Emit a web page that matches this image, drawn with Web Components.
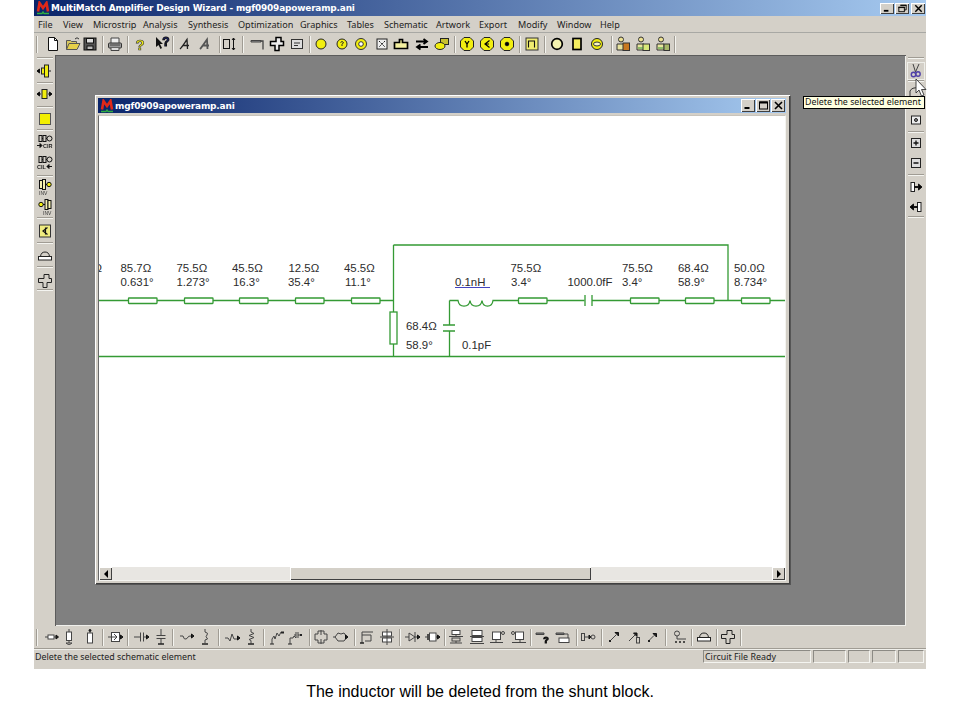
<!DOCTYPE html>
<html lang="en"><head><meta charset="utf-8"><title>MultiMatch</title>
<style>
html,body{margin:0;padding:0;background:#fff}
body{width:960px;height:720px;overflow:hidden;font-family:"Liberation Sans",Arial,sans-serif}
</style></head><body>
<mm-app>
  <mm-titlebar slot="title" text="MultiMatch Amplifier Design Wizard - mgf0909apoweramp.ani"></mm-titlebar>
  <mm-menubar slot="menu" items="File:38,View:63,Microstrip:93,Analysis:143,Synthesis:188,Optimization:238,Graphics:300,Tables:347,Schematic:384,Artwork:436,Export:479,Modify:518,Window:557,Help:600"></mm-menubar>
  <mm-strip slot="top" start="34" spec="|37 53:new 73:open 90:save |103 115:print |128 140:help 162:whats |173 185:a1 205:a2 |220 229:boxarrow |243 258:hammer 277:crossb 297:lbox |310 321:c1 342:c2 361:c3 382:xbox 401:tab 422:arrows 442:over |455 467:cy 487:cl 507:cd |520 532:pulse |545 557:co 577:rr 597:el |612 623:p1 643:p2 663:p3 |675"></mm-strip>
  <mm-strip slot="left" vertical start="55" spec="|58 71:l1 |83 94:l2 |107 119:sq |130 142:cir 163:cil |176 187:inv1 207:inv2 |218 231:lk |243 256:dome |267 281:cross |290"></mm-strip>
  <mm-mdi slot="mdi">
    <mm-child text="mgf0909apoweramp.ani">
      <mm-circuit></mm-circuit>
    </mm-child>
  </mm-mdi>
  <mm-strip slot="right" vertical start="55" spec="|58 71:sc |81 92:hid |108 120:dot |132 143:plus 163:minus |175 187:barr 207:larr |217"></mm-strip>
  <mm-strip slot="bottom" start="34" spec="|37 52:b1 69:b2 90:b3 |103 116:b4 |128 142:b5 161:b6 |173 187:b7 205:b8 |219 233:b9 251:b10 |264 277:b11 295:b12 |310 321:b13 341:b14 |355 367:b15 387:b16 |400 413:b17 433:b18 |445 456:b19 477:b20 498:b21 518:b22 |531 543:b23 563:b24 |577 588:b25 |602 614:b26 634:b27 653:b28 |666 680:b29 |692 704:dome |717 728:cross |741"></mm-strip>
  <mm-status slot="status" text="Delete the selected schematic element" ready="Circuit File Ready"></mm-status>
  <mm-tooltip slot="over" text="Delete the selected element"></mm-tooltip>
</mm-app>
<mm-caption text="The inductor will be deleted from the shunt block."></mm-caption>

<script>
const UI='"Noto Sans","Liberation Sans",Arial,sans-serif';
const Y='#f2ee10';
const CR='M7 1.5h5v4h2.500v4H10v5H6v-5H1.500v-4H7z';
const ICONS={
new:`<path d="M3.500 1.500h6l3 3v10h-9z" fill="#fff"/><path d="M9.500 1.500v3h3"/>`,
open:`<path d="M1.500 13.500v-9h4l1 1h5v2" fill="#d8c860" stroke="#555"/><path d="M1.500 13.500l2.500-6h11l-3 6z" fill="#e6d04a" stroke="#555"/><path d="M10 3q2-2.500 4 0" stroke="#333"/>`,
save:`<rect x="2" y="2" width="12" height="12" fill="#555"/><rect x="4.500" y="2.500" width="7" height="4.500" fill="#ddd"/><rect x="5" y="10" width="6" height="3.500" fill="#bbb"/>`,
print:`<path d="M4 7V2h8v5" fill="#eee" stroke="#444"/><rect x="1.500" y="7" width="13" height="5" rx="1" fill="#999" stroke="#333"/><path d="M4 12v2.500h8V12" fill="#ddd" stroke="#444"/><path d="M3 9h10" stroke="#444"/>`,
help:`<text x="8" y="14" text-anchor="middle" font-family="Liberation Sans" font-weight="700" font-size="15" fill="${Y}" stroke="#333" stroke-width=".6">?</text>`,
whats:`<path d="M2 1v10l2.500-2 2 4 1.500-1-2-4h3z" fill="#111" stroke="none"/><text x="12" y="10" text-anchor="middle" font-family="Liberation Sans" font-weight="700" font-size="12" fill="#16208a">?</text>`,
a1:`<path d="M3 13C5 11 7.500 7 10 3.500L10.500 13M6 9.500h6" stroke="#222" stroke-width="1.300"/>`,
a2:`<path d="M3 13C5 11 7.500 7 10 3.500L10.500 13M6 9.500h6" stroke="#555" stroke-width="1.800"/>`,
boxarrow:`<rect x="2.500" y="3.500" width="6" height="9"/><path d="M12.500 2v12M11 4l1.500-2 1.500 2M11 12l1.500 2 1.500-2"/>`,
hammer:`<path d="M1 4.500h10v1.500H1z" fill="#999" stroke="#444"/><path d="M10.500 5H13v8.500" stroke="#444" stroke-width="1.300"/>`,
cross:`<path d="${CR}" fill="none" stroke="#222" stroke-width="1"/>`,
crossb:`<path d="${CR}" fill="#eee" stroke="#000" stroke-width="1.500"/>`,
lbox:`<rect x="2.500" y="3.500" width="11" height="9" fill="#ddd" stroke="#333"/><path d="M5 7h6M5 9.500h4" stroke="#333"/>`,
c1:`<circle cx="8" cy="8" r="5" fill="${Y}" stroke="#222"/>`,
c2:`<circle cx="8" cy="8" r="5" fill="${Y}" stroke="#222"/><path d="M6.500 6.500q1.500-2 3 0L8 8.500v1.500" stroke="#222"/>`,
c3:`<circle cx="8" cy="8" r="5.500" fill="${Y}" stroke="#333"/><circle cx="8" cy="8" r="2.300" fill="#fff" stroke="#333"/>`,
xbox:`<rect x="3" y="3" width="10" height="10" fill="#eee" stroke="#222"/><path d="M5 5l6 6M11 5l-6 6" stroke="#222" stroke-dasharray="2 1"/>`,
tab:`<path d="M1.500 6.500h5v-3h3v3h5v6h-13z" fill="#f4f0a0" stroke="#000" stroke-width="1.700"/>`,
arrows:`<path d="M2 5.500h10M9.500 3l3.500 2.500-3.500 2.500" stroke="#000" stroke-width="1.800"/><path d="M14 11H4M6.500 8.500L3 11l3.500 2.500" stroke="#000" stroke-width="1.800"/>`,
over:`<rect x="6.500" y="2.500" width="8" height="6" fill="#c8c030" stroke="#222"/><ellipse cx="6" cy="10" rx="5" ry="3.500" fill="${Y}" stroke="#222"/>`,
cy:`<path d="M5 1.500h6l3.500 3.500v6L11 14.500H5L1.500 11V5z" fill="${Y}" stroke="#222"/><path d="M6 5l2 3 2-3M8 8v3.500" stroke="#000" stroke-width="1.300"/>`,
cl:`<path d="M5 1.500h6l3.500 3.500v6L11 14.500H5L1.500 11V5z" fill="${Y}" stroke="#222"/><path d="M10.500 4.500L6 8l4.500 3.500M6 8h4" stroke="#000" stroke-width="1.200"/>`,
cd:`<path d="M5 1.500h6l3.500 3.500v6L11 14.500H5L1.500 11V5z" fill="${Y}" stroke="#222"/><circle cx="8" cy="8" r="1.800" fill="#000"/>`,
pulse:`<rect x="2" y="2" width="12" height="12" fill="#f0ec70" stroke="#333"/><path d="M4.500 11.500V5h6v6.500" stroke="#111" stroke-width="1.100"/>`,
co:`<circle cx="8" cy="8" r="5.300" fill="#f4f2b0" stroke="#000" stroke-width="1.700"/>`,
rr:`<rect x="4" y="2.500" width="8" height="11" fill="#f4ee60" stroke="#000" stroke-width="1.700"/>`,
el:`<circle cx="8" cy="8" r="5.500" fill="${Y}" stroke="#222"/><ellipse cx="8" cy="8" rx="3.500" ry="2" fill="#f8f6c0" stroke="#333"/>`,
p1:`<circle cx="6" cy="3.500" r="2.500" fill="#ece090" stroke="#333"/><path d="M2 14V8h7v6z" fill="#e8e4a0" stroke="#333"/><rect x="8" y="7" width="6.500" height="7.500" fill="#c87820" stroke="#333"/>`,
p2:`<circle cx="6" cy="3.500" r="2.500" fill="#ece090" stroke="#333"/><path d="M2 14V8h7v6z" fill="#e8e4a0" stroke="#333"/><rect x="8" y="8" width="6.500" height="6.500" fill="#d8e878" stroke="#333"/><path d="M3 12h5" stroke="#393"/>`,
p3:`<circle cx="6" cy="3.500" r="2.500" fill="#ece090" stroke="#333"/><path d="M2 14V8h7v6z" fill="#e8e4a0" stroke="#333"/><rect x="9" y="8" width="5.500" height="6.500" fill="#a8b868" stroke="#333"/><path d="M3 12h5" stroke="#393"/>`,
l1:`<path d="M0 8h3" stroke="#222"/><path d="M0 8l2.500-2v4z" fill="#000"/><rect x="4.500" y="5" width="3" height="6" fill="${Y}" stroke="#222"/><rect x="7.500" y="2" width="4" height="12" fill="${Y}" stroke="#222"/><path d="M11.500 8H14" stroke="#222"/>`,
l2:`<path d="M0 8h4M11 8h4" stroke="#222"/><path d="M15 8l-2.500-2v4z" fill="#000"/><path d="M0 8l2.500-2v4z" fill="#000"/><rect x="5" y="3.500" width="5" height="9" fill="${Y}" stroke="#222"/>`,
sq:`<rect x="2.500" y="2.500" width="11" height="11" fill="#f2ee00" stroke="#555"/>`,
cir:`<rect x="2" y="1.500" width="3" height="6"/><rect x="6" y="1.500" width="3" height="6"/><circle cx="12.500" cy="4.500" r="2.500"/><path d="M5 4.500h1M9 4.500h1"/><path d="M0 11.500h3M3 9.500l2 2-2 2z" fill="#000"/><text x="6" y="14" font-family="Liberation Sans" font-weight="700" font-size="5.500" fill="#222" stroke="none">CIR</text>`,
cil:`<rect x="2" y="1.500" width="3" height="6"/><rect x="6" y="1.500" width="3" height="6"/><circle cx="12.500" cy="4.500" r="2.500"/><path d="M5 4.500h1M9 4.500h1"/><text x="0" y="14" font-family="Liberation Sans" font-weight="700" font-size="5.500" fill="#222" stroke="none">CIL</text><path d="M10 11.500h5M10 11.500l2-2v4z" fill="#000"/>`,
inv1:`<rect x="2.500" y="1.500" width="3" height="8" fill="#f4f0b0"/><rect x="5.500" y="0.500" width="3" height="10" fill="#f4f0b0"/><circle cx="12" cy="5.500" r="2.200" fill="${Y}"/><path d="M8.500 5.500H10"/><text x="2" y="15.500" font-family="Liberation Sans" font-size="5" fill="#333" stroke="none">INV</text>`,
inv2:`<circle cx="4" cy="5.500" r="2.200" fill="${Y}"/><path d="M6 5.500h2"/><rect x="8" y="0.500" width="3" height="10" fill="#f4f0b0"/><rect x="11" y="1.500" width="3" height="8" fill="#f4f0b0"/><text x="6" y="15.500" font-family="Liberation Sans" font-size="5" fill="#333" stroke="none">INV</text>`,
lk:`<rect x="2.500" y="2" width="11" height="12" fill="#f0ec80" stroke="#333"/><path d="M10.500 4.500L6 8l4.500 3.500M8.500 4.500v7" stroke="#111" stroke-width="1.200"/>`,
dome:`<path d="M3.500 8.500Q4 4 8 4q4 0 4.500 4.500" stroke="#222" stroke-width="1"/><rect x="1.500" y="8.500" width="13" height="3.500" fill="#fff" stroke="#222" stroke-width="1"/>`,
sc:`<path d="M5 1l2.500 8M11 1L7.500 9" stroke="#444"/><circle cx="5.500" cy="11.500" r="2.200" stroke="#5040a8" stroke-width="1.400"/><circle cx="10" cy="11" r="2.200" stroke="#5040a8" stroke-width="1.400"/>`,
hid:`<path d="M2 12V7q2-4 8-3" stroke="#333"/>`,
dot:`<rect x="3.500" y="4" width="9" height="8" fill="#eee" stroke="#222"/><circle cx="8" cy="8" r="1.500" fill="#888" stroke="#222"/>`,
plus:`<rect x="3.500" y="3.500" width="9" height="9" fill="#ddd" stroke="#222"/><path d="M5.500 8h5M8 5.500v5" stroke="#111" stroke-width="1.300"/>`,
minus:`<rect x="3.500" y="3.500" width="9" height="9" fill="#ddd" stroke="#222"/><path d="M5.500 8h5" stroke="#111" stroke-width="1.500"/>`,
barr:`<rect x="3" y="3.500" width="3.500" height="9" fill="#fff" stroke="#222"/><path d="M6.500 8h5" stroke="#000" stroke-width="1.800"/><path d="M10.500 5l3.500 3-3.500 3z" fill="#000"/>`,
larr:`<rect x="9.500" y="3.500" width="3.500" height="9" fill="#fff" stroke="#222"/><path d="M4.500 8h5" stroke="#000" stroke-width="1.800"/><path d="M5.500 5L2 8l3.500 3z" fill="#000"/>`,
b1:`<path d="M1 8h3M10 8h4" stroke="#444"/><rect x="4" y="6" width="6" height="4" fill="#fff" stroke="#444"/><path d="M14.500 8l-2.500-2v4z" fill="#222"/>`,
b2:`<path d="M8 0v3M8 12v2M5 14l3 2 3-2z" stroke="#444"/><rect x="5.500" y="3" width="5" height="8.500" fill="#fff" stroke="#444"/>`,
b3:`<circle cx="8" cy="1.500" r="1" fill="#222"/><path d="M8 2v2" stroke="#444"/><rect x="5.500" y="4" width="5" height="10" fill="#fff" stroke="#444"/>`,
b4:`<rect x="3.500" y="3.500" width="8" height="9" fill="#fff" stroke="#444"/><path d="M0 8h8M11 8h4M6 5l3 3-3 3" stroke="#444"/><path d="M15 8l-2.500-2v4z" fill="#222"/>`,
b5:`<path d="M0 8h6.500M9.500 8H15M6.500 3.500v9M9.500 3.500v9" stroke="#444"/><path d="M15 8l-2.500-2v4z" fill="#222"/>`,
b6:`<path d="M8 0v6.500M8 9.500V15M3.500 6.500h9M3.500 9.500h9" stroke="#444"/><path d="M5 15h6" stroke="#222" stroke-width="1.500"/>`,
b7:`<path d="M1 7h3q1 4 3 3t2-2 3-1h2" stroke="#444"/><path d="M15 7l-2.500-2v4z" fill="#222"/>`,
b8:`<path d="M8 0v3q4 1 2 3t0 3-2 2v3" stroke="#444"/><path d="M5 15h6" stroke="#222" stroke-width="1.500"/>`,
b9:`<path d="M0 9h3l2 3 2-7 2 5h3" stroke="#444"/><path d="M15 9l-2.500-2v4z" fill="#222"/>`,
b10:`<path d="M8 0v3l3 1.500-5 2 5 2-5 2 2 1v3" stroke="#444"/><path d="M5 15h6" stroke="#222" stroke-width="1.500"/>`,
b11:`<path d="M3 15V10l2-3 1 3 2-6 2 3 2-4" stroke="#444"/><path d="M1 15h4" stroke="#222"/><rect x="12" y="2.500" width="3" height="2" fill="#222" stroke="none"/>`,
b12:`<path d="M3 15V9h3l1-2 2 2V3M11 3v6M7 6h2M11 6h2" stroke="#444"/><path d="M1 15h4" stroke="#222"/><rect x="13" y="5" width="2" height="2" fill="#222" stroke="none"/>`,
b13:`<path d="M5 2h6v3h3v6h-3v3H5v-3H2V5h3z" fill="none" stroke="#444"/><path d="M8 1v5M8 10v5" stroke="#444"/>`,
b14:`<path d="M0 8h2l3-4q3 2 6 0l3 4-3 4H5L2 8" fill="none" stroke="#444"/><path d="M15 8l-2.500-2v4z" fill="#222"/>`,
b15:`<path d="M3 14V3h11M3 6h9v6H6" stroke="#444"/><path d="M1 14h4" stroke="#222" stroke-width="1.500"/>`,
b16:`<rect x="3.500" y="3" width="9" height="4" fill="#fff" stroke="#444"/><rect x="3.500" y="9" width="9" height="4" fill="#fff" stroke="#444"/><path d="M8 0v16M1 8h14" stroke="#444"/>`,
b17:`<path d="M0 8h4M10 8h5M4 4v8l6-4zM10 3v10" stroke="#444"/><path d="M15 8l-2.500-2v4z" fill="#222"/>`,
b18:`<rect x="4.500" y="4" width="6.500" height="8" fill="#fff" stroke="#444"/><path d="M3 5v6" stroke="#222" stroke-width="1.500"/><path d="M0 8h3M11 8h4" stroke="#444"/><path d="M15 8l-2.500-2v4z" fill="#222"/>`,
b19:`<rect x="4" y="1.500" width="8" height="4" fill="#fff" stroke="#444"/><path d="M8 5.500v2M1 7.500h14M2 14h12M8 12v2" stroke="#444"/><rect x="4" y="9" width="8" height="3" stroke="#444"/>`,
b20:`<rect x="3" y="1.500" width="10" height="5" fill="#fff" stroke="#444"/><rect x="3" y="8.500" width="10" height="4" fill="#fff" stroke="#444"/><path d="M1 7.500h14M1 14.500h14" stroke="#444"/>`,
b21:`<rect x="2.500" y="3" width="8" height="7.500" fill="#fff" stroke="#444"/><circle cx="13" cy="4" r="1.500" stroke="#444"/><path d="M0 13.500h13M6 11v2" stroke="#444"/>`,
b22:`<rect x="5.500" y="3" width="8" height="7.500" fill="#fff" stroke="#444"/><circle cx="3" cy="4" r="1.500" stroke="#444"/><path d="M2 13.500h14M10 11v2" stroke="#444"/>`,
b23:`<path d="M1 4h8v1.500H1z" stroke="#444" fill="#888"/><text x="11" y="14" text-anchor="middle" font-family="Liberation Sans" font-weight="700" font-size="9" fill="#222">?</text>`,
b24:`<path d="M1 4h8v1.500H1z" stroke="#444" fill="#888"/><path d="M9 5h4v4" stroke="#444"/><rect x="4" y="9" width="10" height="4.500" fill="#fff" stroke="#444"/>`,
b25:`<rect x="1.500" y="4.500" width="3" height="7" stroke="#444"/><path d="M4.500 8H10" stroke="#444"/><path d="M9 6l2 2-2 2z" fill="#222"/><circle cx="13" cy="8" r="2" stroke="#444"/>`,
b26:`<path d="M3.500 12.500L10 6" stroke="#444"/><path d="M9 3.500h3.500v3.500z" fill="#222"/><rect x="3" y="11" width="2" height="2" fill="#222" stroke="none"/>`,
b27:`<path d="M3 12l6-6" stroke="#444"/><path d="M7.500 4H11v3.500z" fill="#222"/><rect x="10.500" y="8.500" width="3" height="5.500" stroke="#444"/>`,
b28:`<path d="M3.500 12L9 6.500" stroke="#444"/><path d="M8 4.500h3.500V8z" fill="#222"/><rect x="3" y="11" width="2" height="2" fill="#222" stroke="none"/>`,
b29:`<circle cx="5" cy="4.500" r="2.500" stroke="#444"/><path d="M5 7v3h9" stroke="#444"/><path d="M3 13h2M7 13h2M11 13h2" stroke="#222" stroke-width="1.500"/>`
};
const fix=s=>s.replace(/(\d)\.(\d)00\b/g,'$1.$2');
function shadow(el,html){const r=el.attachShadow({mode:'open'});r.innerHTML=fix(html);return r;}

class MMIcon extends HTMLElement{connectedCallback(){
  const body=ICONS[this.getAttribute('name')]||'';
  shadow(this,`<style>:host{display:block;width:16px;height:16px;flex:none}svg{display:block;filter:blur(.3px)}</style>
  <svg width="16" height="16" viewBox="0 0 16 16" fill="none" stroke="#111" stroke-width="1">${body}</svg>`);
}}
customElements.define('mm-icon',MMIcon);

class MMLogo extends HTMLElement{connectedCallback(){
  shadow(this,`<style>:host{display:block;width:14px;height:14px;flex:none}svg{display:block}</style>
  <svg width="14" height="14" viewBox="0 0 14 14"><path d="M2 10.500L3.500 2 7 7l3.500-5L12 10.500" fill="none" stroke="#e02818" stroke-width="2.600"/><path d="M1 12.500h5l1-1.500 1 1.500h5" fill="none" stroke="#30b040" stroke-width="1.300"/></svg>`);
}}
customElements.define('mm-logo',MMLogo);

class MMCapBtn extends HTMLElement{connectedCallback(){
  const k=this.getAttribute('kind');
  const g={min:'<path d="M2.500 8.500h5" stroke="#000" stroke-width="2"/>',
    max:'<rect x="2.500" y="2.500" width="8" height="7" fill="none" stroke="#000"/><path d="M2.500 3h8" stroke="#000" stroke-width="2"/>',
    res:'<path d="M4.500 2.500h6v5h-2" fill="none" stroke="#000"/><rect x="2.500" y="4.500" width="6" height="5" fill="none" stroke="#000"/><path d="M4 2.500h7M2 5h7" stroke="#000"/>',
    close:'<path d="M3 2.500l7 7M10 2.500l-7 7" stroke="#000" stroke-width="1.600"/>'}[k];
  shadow(this,`<style>:host{display:block;width:var(--w,14px);height:var(--h,13px);flex:none;background:#d4d0c8;box-shadow:inset 1px 1px 0 #fff,inset -1px -1px 0 #404040}svg{display:block;margin:auto;height:100%}</style>
  <svg width="13" height="12" viewBox="0 0 13 12">${g}</svg>`);
}}
customElements.define('mm-capbtn',MMCapBtn);

class MMTitlebar extends HTMLElement{connectedCallback(){
  shadow(this,`<style>
  :host{display:flex;align-items:center;height:16px;background:linear-gradient(90deg,#0a246a,#a6caf0);color:#fff;
    font:700 8.95px "DejaVu Sans",Verdana,sans-serif;white-space:nowrap;padding:0 1px 0 2px;box-sizing:border-box}
  span{margin-left:1px;flex:1;letter-spacing:-.02em}
  .b{display:flex;gap:1px}
  mm-capbtn{--w:14px;--h:11px}
  mm-capbtn:last-child{margin-left:1px}
  </style><mm-logo></mm-logo><span>${this.getAttribute('text')}</span><div class="b"><mm-capbtn kind="min"></mm-capbtn><mm-capbtn kind="res"></mm-capbtn><mm-capbtn kind="close"></mm-capbtn></div>`);
}}
customElements.define('mm-titlebar',MMTitlebar);

class MMMenubar extends HTMLElement{connectedCallback(){
  let prev=34;
  const items=this.getAttribute('items').split(',').map(s=>{const [t,x]=s.split(':');const m=+x-prev;prev=+x;return [t,m];});
  const html=items.map((it,i)=>{
    const next=i<items.length-1?items[i+1][1]:40;
    return `<span style="width:${next}px;${i==0?'margin-left:'+it[1]+'px':''}">${it[0]}</span>`;
  }).join('');
  shadow(this,`<style>:host{display:flex;align-items:center;height:17px;background:#d4d0c8;color:#222;font:9.1px ${UI};box-sizing:border-box;border-bottom:1px solid #a8a8a4;white-space:nowrap}span{display:block;flex:none}</style>${html}`);
}}
customElements.define('mm-menubar',MMMenubar);

class MMStrip extends HTMLElement{connectedCallback(){
  const v=this.hasAttribute('vertical');
  let pos=+this.getAttribute('start');
  const parts=this.getAttribute('spec').trim().split(/\s+/);
  let html='';
  for(const p of parts){
    if(p[0]=='|'){
      const c=+p.slice(1);
      const m=c-1-pos; pos=c+1;
      html+=`<i class="sep" style="margin-${v?'top':'left'}:${m}px"></i>`;
    }else{
      const [c,n]=p.split(':');
      const m=+c-8-pos; pos=+c+8;
      html+=`<mm-icon name="${n}" class="${n=='sc'?'raised':''}" style="margin-${v?'top':'left'}:${m}px"></mm-icon>`;
    }
  }
  shadow(this,`<style>
  :host{display:flex;flex-direction:${v?'column':'row'};align-items:center;background:#d4d0c8;box-sizing:border-box;${v?'width:100%;height:100%':'height:22px'}}
  .sep{display:block;flex:none;${v?'width:16px;height:2px;border-top:1px solid #a09c94;border-bottom:1px solid #f4f4f0;box-sizing:border-box':'width:2px;height:17px;border-left:1px solid #a09c94;border-right:1px solid #f4f4f0;box-sizing:border-box'}}
  .raised{outline:1px solid #efefea;box-shadow:1px 1px 0 #a09c94}
  </style>${html}`);
}}
customElements.define('mm-strip',MMStrip);

class MMMdi extends HTMLElement{connectedCallback(){
  shadow(this,`<style>:host{display:block;position:relative;background:#808080;height:100%;box-shadow:inset 1px 1px 0 #5c5c5c,inset -1px -1px 0 #f0f0ec}</style><slot></slot>`);
}}
customElements.define('mm-mdi',MMMdi);

class MMChild extends HTMLElement{connectedCallback(){
  shadow(this,`<style>
  :host{position:absolute;left:40px;top:40px;width:695px;height:489px;box-sizing:border-box;padding:3px 4px 3px 3px;background:#d4d0c8;
    box-shadow:inset 1px 1px 0 #fff,inset -1px -1px 0 #404040,1px 1px 0 #555;display:flex;flex-direction:column}
  .t{display:flex;align-items:center;height:15px;flex:none;background:linear-gradient(90deg,#0a246a,#a6caf0);color:#fff;font:700 9px "DejaVu Sans",Verdana,sans-serif;white-space:nowrap;padding:0 1px 0 2px}
  .t span{flex:1;margin-left:1px;letter-spacing:-.02em}
  .b{display:flex;gap:1px}
  .c{flex:1;display:flex;flex-direction:column;margin-top:2px;border-left:1px solid #6a6a6a;border-top:1px solid #c8c4bc;border-right:1px solid #f4f4f0;border-bottom:1px solid #f4f4f0;min-height:0}
  .main{flex:none;height:451px;background:#fff}
  .sb{display:flex;height:13px;flex:none;background:#e8e6e2}
  .btn{width:13px;flex:none;background:#d4d0c8;box-shadow:inset 1px 1px 0 #fff,inset -1px -1px 0 #404040;display:flex;align-items:center;justify-content:center}
  .thumb{width:301px;flex:none;background:#d4d0c8;box-shadow:inset 1px 1px 0 #fff,inset -1px -1px 0 #404040}
  </style>
  <div class="t"><mm-logo></mm-logo><span>${this.getAttribute('text')}</span><div class="b"><mm-capbtn kind="min"></mm-capbtn><mm-capbtn kind="max"></mm-capbtn><mm-capbtn kind="close"></mm-capbtn></div></div>
  <div class="c"><div class="main"><slot></slot></div>
  <div class="sb"><div class="btn"><svg width="6" height="8"><path d="M5 0v8L1 4z"/></svg></div><div style="width:178px;flex:none"></div><div class="thumb"></div><div style="flex:1"></div><div class="btn"><svg width="6" height="8"><path d="M1 0v8l4-4z"/></svg></div></div></div>`);
}}
customElements.define('mm-child',MMChild);

class MMCircuit extends HTMLElement{connectedCallback(){
  const R=[128,184,239,295,351,518,630,685,741];
  const res=R.map(x=>`<rect x="${x}.5" y="298" width="28.5" height="5.500" rx=".5" fill="#fff"/>`).join('');
  const L=[[93.5,272,'Ω'],[120.5,272,'85.7Ω'],[120.5,286,'0.631°'],[176.5,272,'75.5Ω'],[176.5,286,'1.273°'],[232,272,'45.5Ω'],[233,286,'16.3°'],[288.5,272,'12.5Ω'],[288,286,'35.4°'],[344,272,'45.5Ω'],[345,286,'11.1°'],
   [455,286,'0.1nH'],[510.5,272,'75.5Ω'],[511,286,'3.4°'],[567.5,286,'1000.0fF'],[622,272,'75.5Ω'],[622,286,'3.4°'],[678,272,'68.4Ω'],[678,286,'58.9°'],[734,272,'50.0Ω'],[734,286,'8.734°'],
   [406,330,'68.4Ω'],[406,349,'58.9°'],[462,349,'0.1pF']];
  const txt=L.map(l=>`<text x="${l[0]}" y="${l[1]}">${l[2]}</text>`).join('');
  shadow(this,`<style>:host{display:block;width:686px;height:451px}svg{display:block}text{font:11.4px "Liberation Sans",Arial,sans-serif;fill:#2c2c2c}</style>
  <svg width="686" height="451" viewBox="99 116 686 451">
   <g fill="none" stroke="#349a34" stroke-width="1.300">
    <path d="M99 300.500H393.500M393.500 245V356.500M393.500 245H728V300.500M99 356.500H785"/>
    <path d="M449.500 300.500V325M449.500 331V356.500M443 325H455M443 331H455"/>
    <path d="M449.500 300.500H458C459 308 469 308 470 300.500C471 308 481 308 482 300.500C483 308 492 308 493 300.500H584.500M592 300.500H785"/>
    <path d="M585 295V306M592 295V306"/>
    ${res}
    <rect x="390" y="312" width="7" height="32" fill="#fff"/>
   </g>
   <path d="M455 287.500H490" stroke="#4444c0" stroke-width="1.200"/>
   ${txt}
  </svg>`);
}}
customElements.define('mm-circuit',MMCircuit);

class MMStatus extends HTMLElement{connectedCallback(){
  const W=[108,33,22,24,26];
  shadow(this,`<style>
  :host{display:flex;align-items:flex-start;height:21px;background:#d4d0c8;box-sizing:border-box;border-top:1px solid #a09c94;font:8.9px ${UI};color:#222;white-space:nowrap;position:relative;box-shadow:inset 0 1px 0 #f0f0ec;padding-top:1px}
  .m{margin-left:1px;width:668px;flex:none;line-height:13px}
  .p{flex:none;height:13px;line-height:12px;box-sizing:border-box;border:1px solid;border-color:#8c8a84 #f4f4f0 #f4f4f0 #8c8a84;margin-right:2px;padding-left:1px}
  </style><div class="m">${this.getAttribute('text')}</div>${W.map((w,i)=>`<div class="p" style="width:${w}px">${i==0?this.getAttribute('ready'):''}</div>`).join('')}`);
}}
customElements.define('mm-status',MMStatus);

class MMTooltip extends HTMLElement{connectedCallback(){
  shadow(this,`<style>
  :host{position:absolute;left:769px;top:96px;width:122px;height:13px;box-sizing:border-box;background:#ffffe1;border:1px solid #000;font:8.85px ${UI};color:#111;line-height:11px;white-space:nowrap;padding-left:1px;display:block}
  svg{position:absolute;left:111px;top:-18px;overflow:visible}
  </style>${this.getAttribute('text')}<svg width="12" height="18" viewBox="0 0 12 18"><path d="M1 0v14l3-3 2.500 6 2.500-1-2.500-5.500H11z" fill="#fff" stroke="#333" stroke-width=".9"/></svg>`);
}}
customElements.define('mm-tooltip',MMTooltip);

class MMCaption extends HTMLElement{connectedCallback(){
  shadow(this,`<style>:host{display:block;text-align:center;font:16px "Liberation Sans",Arial,sans-serif;color:#000;padding-top:15px;line-height:16px}</style>${this.getAttribute('text')}`);
}}
customElements.define('mm-caption',MMCaption);

class MMApp extends HTMLElement{connectedCallback(){
  shadow(this,`<style>
  :host{display:block;position:relative;width:892px;height:669px;margin-left:34px;background:#d4d0c8;box-shadow:inset 0 -1px 0 #ece9e2}
  .w{display:grid;grid-template-columns:21px 851px 20px;height:571px}
  </style>
  <slot name="title"></slot><slot name="menu"></slot><slot name="top"></slot>
  <div class="w"><slot name="left"></slot><slot name="mdi"></slot><slot name="right"></slot></div>
  <slot name="bottom"></slot><slot name="status"></slot><slot name="over"></slot>`);
}}
customElements.define('mm-app',MMApp);
</script>
</body></html>
